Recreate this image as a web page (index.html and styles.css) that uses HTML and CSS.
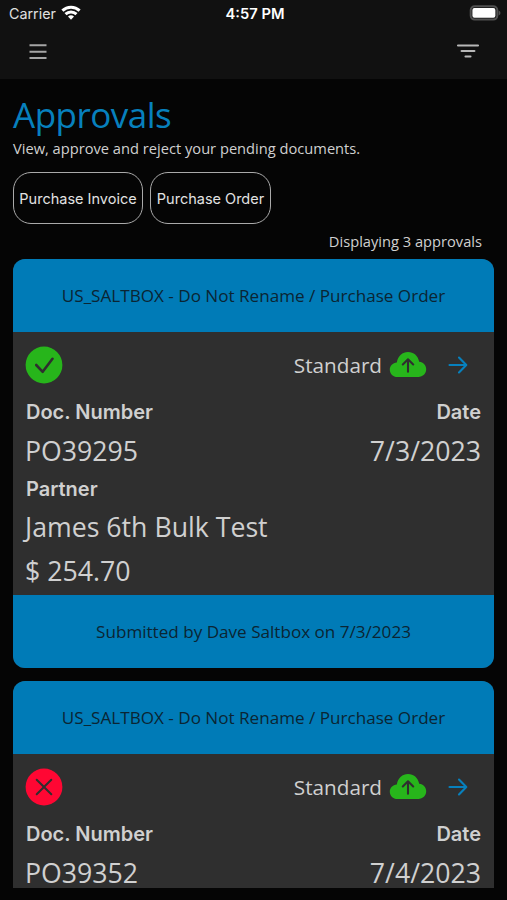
FILE: index.html
```html
<!DOCTYPE html>
<html lang="en">
  <head>
    <meta charset="UTF-8" />
    <meta name="viewport" content="width=device-width, initial-scale=1.0" />
    <title>Approvals</title>
    <link rel="stylesheet" href="styles.css">
  </head>
  <body>
    <header class="topbar">
      <div class="status-bar">
        <div class="carrier">
          <span>Carrier</span>
          <svg class="wifi" width="20" height="15" viewBox="0 0 20 15" fill="none" stroke="#fff" stroke-width="3">
            <path d="M1.4 5.700a12.400 12.400 0 0 1 17.200 0" />
            <path d="M4.500 9.200a8 8 0 0 1 11 0" />
            <path d="M10 14.700l-3-3.100a4.300 4.300 0 0 1 6 0z" fill="#fff" stroke="none" />
          </svg>
        </div>
        <div class="clock">4:57 PM</div>
        <svg class="battery" width="32" height="16" viewBox="0 0 32 16">
          <rect x="1.700" y="1.200" width="26.600" height="13.400" rx="4" fill="none" stroke="#505050" stroke-width="2" />
          <rect x="3.400" y="3" width="23" height="9.800" rx="2" fill="#fff" />
          <path d="M29.600 5.400q1.900.8 1.900 2.500t-1.900 2.500z" fill="#505050" />
        </svg>
      </div>
      <nav class="nav">
        <svg width="18" height="16" viewBox="0 0 18 16" stroke="#a5a5a5" stroke-width="1.9">
          <path d="M.5 2.300h17M.5 8.700h17M.5 15h17" />
        </svg>
        <svg width="24" height="16" viewBox="0 0 24 16" stroke="#b8b8b8" stroke-width="2.1" stroke-linecap="round">
          <path d="M2 2.500h20M5.600 8h12.800M9.500 13.500h5" />
        </svg>
      </nav>
    </header>

    <main class="content">
      <h1>Approvals</h1>
      <p class="subtitle">View, approve and reject your pending documents.</p>

      <div class="filters">
        <button type="button" class="filter-btn invoice">Purchase Invoice</button>
        <button type="button" class="filter-btn order">Purchase Order</button>
      </div>

      <p class="count">Displaying 3 approvals</p>

      <div class="list">
        <section class="card">
          <div class="card-band">US_SALTBOX - Do Not Rename / Purchase Order</div>
          <div class="card-body">
            <div class="card-row actions">
              <svg class="badge" width="38" height="38" viewBox="0 0 38 38" fill="none">
                <circle cx="19" cy="19" r="18.4" fill="#27b51b" />
                <path d="M11.2 19l6.5 6.8 9.8-13" stroke="#2f2f2f" stroke-width="2.6" stroke-linecap="round" stroke-linejoin="round" />
              </svg>
              <div class="type">
                <span>Standard</span>
                <svg class="cloud" width="38" height="27" viewBox="0 0 38 27" fill="none">
                  <path d="M8.5 26C4 26 .8 22.8.8 18.7c0-4 3-6.8 7-7.3C9 5 13.5 1 19 1c5.800 0 9.800 3.500 11.200 9.700 4.200.6 7 3.400 7 7.400 0 4.600-3.300 7.900-7.900 7.900z" fill="#27b51b" />
                  <path d="M19 20.800V8.600M13.800 13.400L19 8.300l5.200 5.100" stroke="#2f2f2f" stroke-width="2.1" stroke-linecap="round" stroke-linejoin="round" />
                </svg>
                <svg class="arrow" width="20" height="18" viewBox="0 0 20 18" fill="none" stroke="#0780bd" stroke-width="2.100" stroke-linecap="round" stroke-linejoin="round">
                  <path d="M1.500 9h16.500M11 1.600L18.300 9 11 16.400" />
                </svg>
              </div>
            </div>
            <div class="card-row label"><span>Doc. Number</span><span>Date</span></div>
            <div class="card-row value"><span>PO39295</span><span>7/3/2023</span></div>
            <div class="card-row label partner"><span>Partner</span></div>
            <div class="card-row value"><span>James 6th Bulk Test</span></div>
            <div class="card-row value"><span>$ 254.70</span></div>
          </div>
          <div class="card-band">Submitted by Dave Saltbox on 7/3/2023</div>
        </section>

        <section class="card">
          <div class="card-band">US_SALTBOX - Do Not Rename / Purchase Order</div>
          <div class="card-body">
            <div class="card-row actions">
              <svg class="badge" width="38" height="38" viewBox="0 0 38 38" fill="none">
                <circle cx="19" cy="19" r="18.4" fill="#ff0733" />
                <path d="M11.700 11.700l14.600 14.600M26.300 11.700L11.700 26.300" stroke="#2f2f2f" stroke-width="2" stroke-linecap="round" />
              </svg>
              <div class="type">
                <span>Standard</span>
                <svg class="cloud" width="38" height="27" viewBox="0 0 38 27" fill="none">
                  <path d="M8.5 26C4 26 .8 22.8.8 18.7c0-4 3-6.8 7-7.3C9 5 13.5 1 19 1c5.800 0 9.800 3.500 11.200 9.700 4.200.6 7 3.400 7 7.400 0 4.600-3.300 7.900-7.900 7.900z" fill="#27b51b" />
                  <path d="M19 20.800V8.600M13.800 13.400L19 8.300l5.200 5.100" stroke="#2f2f2f" stroke-width="2.1" stroke-linecap="round" stroke-linejoin="round" />
                </svg>
                <svg class="arrow" width="20" height="18" viewBox="0 0 20 18" fill="none" stroke="#0780bd" stroke-width="2.100" stroke-linecap="round" stroke-linejoin="round">
                  <path d="M1.500 9h16.500M11 1.600L18.300 9 11 16.400" />
                </svg>
              </div>
            </div>
            <div class="card-row label"><span>Doc. Number</span><span>Date</span></div>
            <div class="card-row value"><span>PO39352</span><span>7/4/2023</span></div>
          </div>
        </section>
      </div>
    </main>
  </body>
</html>
```
FILE: styles.css
```css
* {
  box-sizing: border-box;
}
body {
  margin: 0;
  height: 900px;
  display: flex;
  flex-direction: column;
  overflow: hidden;
  background: #050505;
  color: #d0d0d0;
  font-family: "Open Sans", sans-serif;
}
.topbar {
  height: 79px;
  flex: none;
  background: #111;
}
.status-bar {
  display: grid;
  grid-template-columns: 1fr auto 1fr;
  align-items: center;
  height: 28px;
  padding: 0 6px 0 9px;
  font-family: Inter, sans-serif;
  font-size: 14.3px;
  color: #fff;
}
.carrier {
  display: flex;
  align-items: center;
  gap: 5px;
  margin-top: -2px;
  color: #e0e0e0;
}
.wifi {
  margin-top: -1px;
}
.clock {
  font-size: 14.7px;
  font-weight: 600;
}
.battery {
  justify-self: end;
  margin-top: -2px;
}
.nav {
  display: flex;
  justify-content: space-between;
  align-items: center;
  height: 46px;
  padding: 0 27px 0 29px;
}
.content {
  display: flex;
  flex-direction: column;
  flex: 1;
  min-height: 0;
  padding: 15px 13px 12px;
}
h1 {
  margin: 0;
  font-size: 35px;
  font-weight: 400;
  line-height: 42px;
  letter-spacing: -0.5px;
  color: #0780bd;
}
.subtitle {
  margin: 1px 0 0;
  font-size: 14.66px;
  line-height: 22px;
}
.filters {
  display: flex;
  gap: 7px;
  margin-top: 13px;
}
.filter-btn {
  height: 52px;
  padding: 0;
  border: 1.5px solid #aaa;
  border-radius: 18px;
  background: none;
  color: #e2e2e2;
  font-family: Inter, sans-serif;
  font-size: 14.5px;
  white-space: nowrap;
}
.filter-btn.invoice {
  width: 130px;
}
.filter-btn.order {
  width: 121px;
}
.count {
  margin: 6px 12px 6px 0;
  font-size: 14.66px;
  line-height: 23px;
  text-align: right;
}
.list {
  flex: 1;
  min-height: 0;
  overflow: hidden;
}
.card {
  margin-bottom: 13px;
  border-radius: 12px;
  overflow: hidden;
  background: #2f2f2f;
}
.card-band {
  display: flex;
  align-items: center;
  justify-content: center;
  height: 73px;
  background: #007bb7;
  color: #0b2533;
  font-size: 17.1px;
}
.card-body {
  height: 263px;
  padding: 13px 13px 0 12px;
}
.card-row {
  display: flex;
  justify-content: space-between;
  align-items: center;
}
.actions {
  height: 40px;
}
.type {
  display: flex;
  align-items: center;
  padding-right: 13px;
  font-size: 20.7px;
}
.cloud {
  margin: -2px 0 0 7px;
}
.arrow {
  margin-left: 21px;
}
.label {
  height: 34px;
  margin-top: 10px;
  padding-left: 1px;
  font-family: Inter, sans-serif;
  font-size: 20px;
  font-weight: 600;
}
.value {
  height: 44px;
  font-size: 26.7px;
  line-height: 28px;
}
.label.partner {
  height: 32px;
  margin-top: 0;
}
```
